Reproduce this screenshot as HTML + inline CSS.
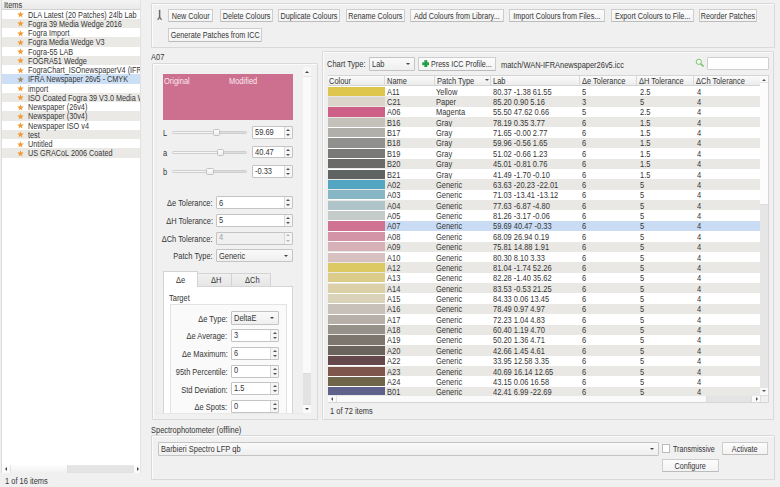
<!DOCTYPE html><html><head><meta charset="utf-8"><style>
*{box-sizing:border-box}
html,body{margin:0;padding:0}
body{width:780px;height:487px;overflow:hidden;background:#f0f0f0;position:relative;font-family:"Liberation Sans",sans-serif;font-size:8.3px;color:#353535}
.a{position:absolute}
.t{position:absolute;white-space:nowrap;line-height:10px;height:10px;transform:scaleX(.9);transform-origin:0 50%}
.t.r{transform-origin:100% 50%}
.gbox{border:1px solid #d9d9d9;border-radius:1px;box-shadow:inset 1px 1px 0 #fbfbfb}
.btn{border:1px solid #cdcdcd;border-bottom-color:#bcbcbc;background:linear-gradient(#fcfcfc,#f3f3f3);border-radius:1px;text-align:center;white-space:nowrap}
.btn span{position:absolute;left:-30px;right:-30px;top:1px;line-height:11px;transform:scaleX(.87)}
.spin{border:1px solid #c4c4c4;background:#fff;border-radius:1px;overflow:hidden}
.spin span{position:absolute;left:2px;top:-0.4px;white-space:nowrap;transform:scaleX(.9);transform-origin:0 50%}
.spin.dis{background:#f0f0f0;color:#a0a0a0}
.sa{position:absolute;right:0;top:0;width:8px;border-left:1px solid #d8d8d8;background:#f5f5f5}
.sa b{position:absolute;left:1.6px;width:0;height:0;border-left:2.3px solid transparent;border-right:2.3px solid transparent}
.sa .up{top:1.8px;border-bottom:2.4px solid #555}
.sa .dn{bottom:1.8px;border-top:2.4px solid #555}
.spin.dis .sa b{opacity:.4}
.combo{border:1px solid #c4c4c4;background:linear-gradient(#fafafa,#efefef);border-radius:1px;overflow:hidden}
.combo span{position:absolute;left:2px;top:0;white-space:nowrap;transform:scaleX(.9);transform-origin:0 50%}
.dd{position:absolute;right:4px;top:50%;margin-top:-1px;width:0;height:0;border-left:2.5px solid transparent;border-right:2.5px solid transparent;border-top:2.5px solid #444}
.row{position:absolute;left:0;right:0;white-space:nowrap}
</style></head><body>
<div class="a" style="left:1px;top:0;width:140px;height:473.4px;background:#fff;border-left:1px solid #dcdcdc;border-right:1px solid #e2e2e2;overflow:hidden">
<div class="a" style="left:0;top:0;width:140px;height:9.5px;background:linear-gradient(#f4f4f4,#e9e9e9);border-bottom:1px solid #d2d2d2"></div>
<div class="t" style="left:2.3px;top:-0.3px">Items</div>
<div class="a" style="left:0;top:9.50px;width:140px;height:9.25px;background:#fff"></div>
<div class="a" style="left:0;top:18.75px;width:140px;height:9.25px;background:#eae9e6"></div>
<div class="a" style="left:0;top:28.00px;width:140px;height:9.25px;background:#fff"></div>
<div class="a" style="left:0;top:37.25px;width:140px;height:9.25px;background:#eae9e6"></div>
<div class="a" style="left:0;top:46.50px;width:140px;height:9.25px;background:#fff"></div>
<div class="a" style="left:0;top:55.75px;width:140px;height:9.25px;background:#eae9e6"></div>
<div class="a" style="left:0;top:65.00px;width:140px;height:9.25px;background:#fff"></div>
<div class="a" style="left:0;top:74.25px;width:140px;height:9.25px;background:#cddff4"></div>
<div class="a" style="left:0;top:83.50px;width:140px;height:9.25px;background:#fff"></div>
<div class="a" style="left:0;top:92.75px;width:140px;height:9.25px;background:#eae9e6"></div>
<div class="a" style="left:0;top:102.00px;width:140px;height:9.25px;background:#fff"></div>
<div class="a" style="left:0;top:111.25px;width:140px;height:9.25px;background:#eae9e6"></div>
<div class="a" style="left:0;top:120.50px;width:140px;height:9.25px;background:#fff"></div>
<div class="a" style="left:0;top:129.75px;width:140px;height:9.25px;background:#eae9e6"></div>
<div class="a" style="left:0;top:139.00px;width:140px;height:9.25px;background:#fff"></div>
<div class="a" style="left:0;top:148.25px;width:140px;height:9.25px;background:#eae9e6"></div>
<div class="a" style="left:0;top:9.50px;width:140px;height:9.25px"><svg width="7" height="7" viewBox="0 0 10 10" style="position:absolute;left:14.9px;top:1.6px"><path d="M5 0.3 L6.2 3.6 L9.7 3.7 L6.9 5.9 L7.9 9.4 L5 7.3 L2.1 9.4 L3.1 5.9 L0.3 3.7 L3.8 3.6Z" fill="#ef9a32"/></svg><div class="t" style="left:26px;top:0px;transform:scaleX(.875)">DLA Latest (20 Patches) 24lb Lab</div></div>
<div class="a" style="left:0;top:18.75px;width:140px;height:9.25px"><svg width="7" height="7" viewBox="0 0 10 10" style="position:absolute;left:14.9px;top:1.6px"><path d="M5 0.3 L6.2 3.6 L9.7 3.7 L6.9 5.9 L7.9 9.4 L5 7.3 L2.1 9.4 L3.1 5.9 L0.3 3.7 L3.8 3.6Z" fill="#ef9a32"/></svg><div class="t" style="left:26px;top:0px;transform:scaleX(.875)">Fogra 39 Media Wedge 2016</div></div>
<div class="a" style="left:0;top:28.00px;width:140px;height:9.25px"><svg width="7" height="7" viewBox="0 0 10 10" style="position:absolute;left:14.9px;top:1.6px"><path d="M5 0.3 L6.2 3.6 L9.7 3.7 L6.9 5.9 L7.9 9.4 L5 7.3 L2.1 9.4 L3.1 5.9 L0.3 3.7 L3.8 3.6Z" fill="#ef9a32"/></svg><div class="t" style="left:26px;top:0px;transform:scaleX(.875)">Fogra Import</div></div>
<div class="a" style="left:0;top:37.25px;width:140px;height:9.25px"><svg width="7" height="7" viewBox="0 0 10 10" style="position:absolute;left:14.9px;top:1.6px"><path d="M5 0.3 L6.2 3.6 L9.7 3.7 L6.9 5.9 L7.9 9.4 L5 7.3 L2.1 9.4 L3.1 5.9 L0.3 3.7 L3.8 3.6Z" fill="#ef9a32"/></svg><div class="t" style="left:26px;top:0px;transform:scaleX(.875)">Fogra Media Wedge V3</div></div>
<div class="a" style="left:0;top:46.50px;width:140px;height:9.25px"><svg width="7" height="7" viewBox="0 0 10 10" style="position:absolute;left:14.9px;top:1.6px"><path d="M5 0.3 L6.2 3.6 L9.7 3.7 L6.9 5.9 L7.9 9.4 L5 7.3 L2.1 9.4 L3.1 5.9 L0.3 3.7 L3.8 3.6Z" fill="#ef9a32"/></svg><div class="t" style="left:26px;top:0px;transform:scaleX(.875)">Fogra-55 LAB</div></div>
<div class="a" style="left:0;top:55.75px;width:140px;height:9.25px"><svg width="7" height="7" viewBox="0 0 10 10" style="position:absolute;left:14.9px;top:1.6px"><path d="M5 0.3 L6.2 3.6 L9.7 3.7 L6.9 5.9 L7.9 9.4 L5 7.3 L2.1 9.4 L3.1 5.9 L0.3 3.7 L3.8 3.6Z" fill="#ef9a32"/></svg><div class="t" style="left:26px;top:0px;transform:scaleX(.875)">FOGRA51 Wedge</div></div>
<div class="a" style="left:0;top:65.00px;width:140px;height:9.25px"><svg width="7" height="7" viewBox="0 0 10 10" style="position:absolute;left:14.9px;top:1.6px"><path d="M5 0.3 L6.2 3.6 L9.7 3.7 L6.9 5.9 L7.9 9.4 L5 7.3 L2.1 9.4 L3.1 5.9 L0.3 3.7 L3.8 3.6Z" fill="#ef9a32"/></svg><div class="t" style="left:26px;top:0px;transform:scaleX(.875)">FograChart_ISOnewspaperV4 (IFRA26)</div></div>
<div class="a" style="left:0;top:74.25px;width:140px;height:9.25px"><svg width="7" height="7" viewBox="0 0 10 10" style="position:absolute;left:14.9px;top:1.6px"><path d="M5 0.3 L6.2 3.6 L9.7 3.7 L6.9 5.9 L7.9 9.4 L5 7.3 L2.1 9.4 L3.1 5.9 L0.3 3.7 L3.8 3.6Z" fill="#a08a6a"/></svg><div class="t" style="left:26px;top:0px;transform:scaleX(.875)">IFRA Newspaper 26v5 - CMYK</div></div>
<div class="a" style="left:0;top:83.50px;width:140px;height:9.25px"><svg width="7" height="7" viewBox="0 0 10 10" style="position:absolute;left:14.9px;top:1.6px"><path d="M5 0.3 L6.2 3.6 L9.7 3.7 L6.9 5.9 L7.9 9.4 L5 7.3 L2.1 9.4 L3.1 5.9 L0.3 3.7 L3.8 3.6Z" fill="#ef9a32"/></svg><div class="t" style="left:26px;top:0px;transform:scaleX(.875)">import</div></div>
<div class="a" style="left:0;top:92.75px;width:140px;height:9.25px"><svg width="7" height="7" viewBox="0 0 10 10" style="position:absolute;left:14.9px;top:1.6px"><path d="M5 0.3 L6.2 3.6 L9.7 3.7 L6.9 5.9 L7.9 9.4 L5 7.3 L2.1 9.4 L3.1 5.9 L0.3 3.7 L3.8 3.6Z" fill="#ef9a32"/></svg><div class="t" style="left:26px;top:0px;transform:scaleX(.875)">ISO Coated Fogra 39 V3.0 Media Wedge</div></div>
<div class="a" style="left:0;top:102.00px;width:140px;height:9.25px"><svg width="7" height="7" viewBox="0 0 10 10" style="position:absolute;left:14.9px;top:1.6px"><path d="M5 0.3 L6.2 3.6 L9.7 3.7 L6.9 5.9 L7.9 9.4 L5 7.3 L2.1 9.4 L3.1 5.9 L0.3 3.7 L3.8 3.6Z" fill="#ef9a32"/></svg><div class="t" style="left:26px;top:0px;transform:scaleX(.875)">Newspaper (26v4)</div></div>
<div class="a" style="left:0;top:111.25px;width:140px;height:9.25px"><svg width="7" height="7" viewBox="0 0 10 10" style="position:absolute;left:14.9px;top:1.6px"><path d="M5 0.3 L6.2 3.6 L9.7 3.7 L6.9 5.9 L7.9 9.4 L5 7.3 L2.1 9.4 L3.1 5.9 L0.3 3.7 L3.8 3.6Z" fill="#ef9a32"/></svg><div class="t" style="left:26px;top:0px;transform:scaleX(.875)">Newspaper (30v4)</div></div>
<div class="a" style="left:0;top:120.50px;width:140px;height:9.25px"><svg width="7" height="7" viewBox="0 0 10 10" style="position:absolute;left:14.9px;top:1.6px"><path d="M5 0.3 L6.2 3.6 L9.7 3.7 L6.9 5.9 L7.9 9.4 L5 7.3 L2.1 9.4 L3.1 5.9 L0.3 3.7 L3.8 3.6Z" fill="#ef9a32"/></svg><div class="t" style="left:26px;top:0px;transform:scaleX(.875)">Newspaper ISO v4</div></div>
<div class="a" style="left:0;top:129.75px;width:140px;height:9.25px"><svg width="7" height="7" viewBox="0 0 10 10" style="position:absolute;left:14.9px;top:1.6px"><path d="M5 0.3 L6.2 3.6 L9.7 3.7 L6.9 5.9 L7.9 9.4 L5 7.3 L2.1 9.4 L3.1 5.9 L0.3 3.7 L3.8 3.6Z" fill="#ef9a32"/></svg><div class="t" style="left:26px;top:0px;transform:scaleX(.875)">test</div></div>
<div class="a" style="left:0;top:139.00px;width:140px;height:9.25px"><svg width="7" height="7" viewBox="0 0 10 10" style="position:absolute;left:14.9px;top:1.6px"><path d="M5 0.3 L6.2 3.6 L9.7 3.7 L6.9 5.9 L7.9 9.4 L5 7.3 L2.1 9.4 L3.1 5.9 L0.3 3.7 L3.8 3.6Z" fill="#ef9a32"/></svg><div class="t" style="left:26px;top:0px;transform:scaleX(.875)">Untitled</div></div>
<div class="a" style="left:0;top:148.25px;width:140px;height:9.25px"><svg width="7" height="7" viewBox="0 0 10 10" style="position:absolute;left:14.9px;top:1.6px"><path d="M5 0.3 L6.2 3.6 L9.7 3.7 L6.9 5.9 L7.9 9.4 L5 7.3 L2.1 9.4 L3.1 5.9 L0.3 3.7 L3.8 3.6Z" fill="#ef9a32"/></svg><div class="t" style="left:26px;top:0px;transform:scaleX(.875)">US GRACoL 2006 Coated</div></div>
<div class="a" style="left:0;top:464.6px;width:140px;height:8.8px;background:#e4e4e4;border-top:1px solid #e8e8e8;border-bottom:1px solid #e2e2e2"></div>
<div class="a" style="left:0;top:465.4px;width:8.2px;height:7.8px;background:#fbfbfb"></div>
<div class="a" style="left:3px;top:467.3px;width:0;height:0;border-top:2.2px solid transparent;border-bottom:2.2px solid transparent;border-right:2.2px solid #444"></div>
<div class="a" style="left:8.2px;top:465.2px;width:58.2px;height:8px;background:linear-gradient(#fdfdfd,#f1f1f1);border-left:1px solid #e3e3e3;border-right:1px solid #dedede"></div>
<div class="a" style="left:131.5px;top:465.4px;width:8.5px;height:7.8px;background:#fbfbfb"></div>
<div class="a" style="left:134.6px;top:467.3px;width:0;height:0;border-top:2.2px solid transparent;border-bottom:2.2px solid transparent;border-left:2.2px solid #444"></div>
</div>
<div class="t" style="left:4.5px;top:475.6px;">1 of 16 items</div>
<div class="a gbox" style="left:151px;top:2.5px;width:624.2px;height:45.5px;"></div>
<svg class="a" style="left:155px;top:9px" width="10" height="12" viewBox="0 0 10 12"><path d="M4.6 0.8 V8" stroke="#6a6a6a" stroke-width="1.5" fill="none"/><path d="M4.6 7.5 Q4.6 9 2.6 10.8 M4.6 7.5 Q4.6 9 6.6 10.8" stroke="#6a6a6a" stroke-width="1.3" fill="none"/></svg>
<div class="a btn" style="left:168.1px;top:8.9px;width:45.4px;height:13.2px;"><span>New Colour</span></div>
<div class="a btn" style="left:219.6px;top:8.9px;width:53.2px;height:13.2px;"><span>Delete Colours</span></div>
<div class="a btn" style="left:278.4px;top:8.9px;width:62.0px;height:13.2px;"><span>Duplicate Colours</span></div>
<div class="a btn" style="left:346.1px;top:8.9px;width:58.7px;height:13.2px;"><span>Rename Colours</span></div>
<div class="a btn" style="left:410.4px;top:8.9px;width:93.6px;height:13.2px;"><span>Add Colours from Library...</span></div>
<div class="a btn" style="left:509.3px;top:8.9px;width:95.5px;height:13.2px;"><span>Import Colours from Files...</span></div>
<div class="a btn" style="left:610.7px;top:8.9px;width:83.3px;height:13.2px;"><span>Export Colours to File...</span></div>
<div class="a btn" style="left:698.9px;top:8.9px;width:57.9px;height:13.2px;"><span>Reorder Patches</span></div>
<div class="a btn" style="left:168.1px;top:28.3px;width:94.4px;height:13.5px;"><span>Generate Patches from ICC</span></div>
<div class="t" style="left:150.5px;top:51.7px;">A07</div>
<div class="a gbox" style="left:151.5px;top:63px;width:166.3px;height:356.9px;"></div>
<div class="a" style="left:155.5px;top:67px;width:157px;height:347px;border-left:1px solid #ebebeb;"></div>
<div class="a" style="left:0;top:0;width:780px;height:487px;clip-path:inset(67px 476.5px 74px 155.5px)">
<div class="a" style="left:162.6px;top:74.2px;width:130.6px;height:45.8px;background:#cd6f8e"></div>
<div class="t" style="left:163.5px;top:75.5px;color:#fbe9ee">Original</div>
<div class="t" style="left:229.1px;top:75.5px;color:#fbe9ee">Modified</div>
<div class="t" style="left:162.6px;top:128.3px;">L</div>
<div class="a" style="left:171.8px;top:131.0px;width:75.6px;height:3.0px;background:#dcdcdc;border:0.5px solid #cfcfcf;border-radius:1.5px"></div>
<div class="a" style="left:171.8px;top:131.0px;width:42.9px;height:3.0px;background:#f5f5f5;border:0.5px solid #cfcfcf;border-radius:1.5px"></div>
<div class="a" style="left:212.7px;top:128.7px;width:7.2px;height:7.6px;background:linear-gradient(#fdfdfd,#eeeeee);border:1px solid #c2c2c2;border-radius:1.5px"></div>
<div class="a spin" style="left:251.8px;top:126.1px;width:41.1px;height:12.6px;"><span style="line-height:11.6px">59.69</span><i class="sa" style="height:10.6px"><b class="up"></b><b class="dn"></b></i></div>
<div class="t" style="left:162.6px;top:148.1px;">a</div>
<div class="a" style="left:171.8px;top:150.8px;width:75.6px;height:3.0px;background:#dcdcdc;border:0.5px solid #cfcfcf;border-radius:1.5px"></div>
<div class="a" style="left:171.8px;top:150.8px;width:46.9px;height:3.0px;background:#f5f5f5;border:0.5px solid #cfcfcf;border-radius:1.5px"></div>
<div class="a" style="left:216.7px;top:148.5px;width:7.2px;height:7.6px;background:linear-gradient(#fdfdfd,#eeeeee);border:1px solid #c2c2c2;border-radius:1.5px"></div>
<div class="a spin" style="left:251.8px;top:145.9px;width:41.1px;height:12.6px;"><span style="line-height:11.6px">40.47</span><i class="sa" style="height:10.6px"><b class="up"></b><b class="dn"></b></i></div>
<div class="t" style="left:162.6px;top:167.4px;">b</div>
<div class="a" style="left:171.8px;top:170.1px;width:75.6px;height:3.0px;background:#dcdcdc;border:0.5px solid #cfcfcf;border-radius:1.5px"></div>
<div class="a" style="left:171.8px;top:170.1px;width:36.6px;height:3.0px;background:#f5f5f5;border:0.5px solid #cfcfcf;border-radius:1.5px"></div>
<div class="a" style="left:206.4px;top:167.79999999999998px;width:7.2px;height:7.6px;background:linear-gradient(#fdfdfd,#eeeeee);border:1px solid #c2c2c2;border-radius:1.5px"></div>
<div class="a spin" style="left:251.8px;top:165.2px;width:41.1px;height:12.6px;"><span style="line-height:11.6px">-0.33</span><i class="sa" style="height:10.6px"><b class="up"></b><b class="dn"></b></i></div>
<div class="t r" style="right:567.1px;top:198.35px;">Δe Tolerance:</div>
<div class="a spin" style="left:216.4px;top:196px;width:76.4px;height:13.1px;"><span style="line-height:12.1px">6</span><i class="sa" style="height:11.1px"><b class="up"></b><b class="dn"></b></i></div>
<div class="t r" style="right:567.1px;top:216.2px;">ΔH Tolerance:</div>
<div class="a spin" style="left:216.4px;top:214px;width:76.4px;height:12.8px;"><span style="line-height:11.8px">5</span><i class="sa" style="height:10.8px"><b class="up"></b><b class="dn"></b></i></div>
<div class="t r" style="right:567.1px;top:233.95px;">ΔCh Tolerance:</div>
<div class="a spin dis" style="left:216.4px;top:231.7px;width:76.4px;height:12.9px;"><span style="line-height:11.9px">4</span><i class="sa" style="height:10.9px"><b class="up"></b><b class="dn"></b></i></div>
<div class="t r" style="right:567.1px;top:251.3px;">Patch Type:</div>
<div class="a combo" style="left:216.4px;top:249px;width:76.4px;height:13px;"><span style="line-height:12px">Generic</span><b class="dd"></b></div>
<div class="a" style="left:163.4px;top:286px;width:129.4px;height:134px;background:#fff;border:1px solid #d6d6d6"></div>
<div class="a" style="left:197.2px;top:272.9px;width:34.7px;height:13.6px;background:linear-gradient(#f1f1f1,#e6e6e6);border:1px solid #d3d3d3;border-bottom:none"></div>
<div class="a" style="left:231.2px;top:272.9px;width:39.4px;height:13.6px;background:linear-gradient(#f1f1f1,#e6e6e6);border:1px solid #d3d3d3;border-bottom:none"></div>
<div class="a" style="left:163.4px;top:271.2px;width:34.4px;height:15.8px;background:#fff;border:1px solid #d3d3d3;border-bottom:none"></div>
<div class="t" style="left:176px;top:274.8px;">Δe</div>
<div class="t" style="left:210.7px;top:275.3px;">ΔH</div>
<div class="t" style="left:245px;top:275.3px;">ΔCh</div>
<div class="t" style="left:169.3px;top:293.4px;">Target</div>
<div class="a" style="left:170.2px;top:304.4px;width:116.4px;height:125.6px;border:1px solid #e3e3e3;background:#fafafa"></div>
<div class="t r" style="right:552.7px;top:313.8px;">Δe Type:</div>
<div class="a combo" style="left:231.4px;top:311.2px;width:48.0px;height:13.4px;"><span style="line-height:12.4px">DeltaE</span><b class="dd"></b></div>
<div class="t r" style="right:552.7px;top:331.1px;">Δe Average:</div>
<div class="a spin" style="left:231.4px;top:328.90000000000003px;width:48.0px;height:12.8px;"><span style="line-height:11.8px">3</span><i class="sa" style="height:10.8px"><b class="up"></b><b class="dn"></b></i></div>
<div class="t r" style="right:552.7px;top:349.1px;">Δe Maximum:</div>
<div class="a spin" style="left:231.4px;top:346.90000000000003px;width:48.0px;height:12.8px;"><span style="line-height:11.8px">6</span><i class="sa" style="height:10.8px"><b class="up"></b><b class="dn"></b></i></div>
<div class="t r" style="right:552.7px;top:367.0px;">95th Percentile:</div>
<div class="a spin" style="left:231.4px;top:364.8px;width:48.0px;height:12.8px;"><span style="line-height:11.8px">0</span><i class="sa" style="height:10.8px"><b class="up"></b><b class="dn"></b></i></div>
<div class="t r" style="right:552.7px;top:384.6px;">Std Deviation:</div>
<div class="a spin" style="left:231.4px;top:382.40000000000003px;width:48.0px;height:12.8px;"><span style="line-height:11.8px">1.5</span><i class="sa" style="height:10.8px"><b class="up"></b><b class="dn"></b></i></div>
<div class="t r" style="right:552.7px;top:402.4px;">Δe Spots:</div>
<div class="a spin" style="left:231.4px;top:400.20000000000005px;width:48.0px;height:12.8px;"><span style="line-height:11.8px">0</span><i class="sa" style="height:10.8px"><b class="up"></b><b class="dn"></b></i></div>
</div>
<div class="a" style="left:303.4px;top:67px;width:7.9px;height:346.2px;background:#fafafa"></div>
<div class="a" style="left:303.4px;top:67px;width:7.9px;height:9.8px;background:#f7f7f7;border-bottom:1px solid #e4e4e4"></div>
<div class="a" style="left:303.4px;top:372.9px;width:7.9px;height:32.0px;background:#e3e3e3;border-top:1px solid #dcdcdc;border-bottom:1px solid #dcdcdc"></div>
<div class="a" style="left:304.7px;top:71.4px;width:0;height:0;border-left:2.7px solid transparent;border-right:2.7px solid transparent;border-bottom:2.8px solid #444"></div>
<div class="a" style="left:304.9px;top:407.8px;width:0;height:0;border-left:2.5px solid transparent;border-right:2.5px solid transparent;border-top:2.6px solid #444"></div>
<div class="a" style="left:155.5px;top:413px;width:147.9px;height:1px;background:#e8e8e8"></div>
<div class="a gbox" style="left:322.2px;top:51.2px;width:452.2px;height:368.7px;"></div>
<div class="t" style="left:326.9px;top:59.2px;">Chart Type:</div>
<div class="a combo" style="left:369.4px;top:56.7px;width:45.6px;height:13.9px;"><span style="line-height:12.9px">Lab</span><b class="dd"></b></div>
<div class="a btn" style="left:418.2px;top:57.3px;width:77.8px;height:13.3px;"><span></span></div>
<svg class="a" style="left:421.8px;top:59.9px" width="7.6" height="7.6" viewBox="0 0 7 7"><path d="M2.3 0.3H4.7V2.3H6.7V4.7H4.7V6.7H2.3V4.7H0.3V2.3H2.3Z" fill="#23a047" stroke="#23a047" stroke-width="0.3" stroke-linejoin="round"/></svg>
<div class="t" style="left:431.4px;top:59.3px;transform:scaleX(.86)">Press ICC Profile...</div>
<div class="t" style="left:501.3px;top:59.8px;">match/WAN-IFRAnewspaper26v5.icc</div>
<svg class="a" style="left:694.5px;top:58.3px" width="10" height="10" viewBox="0 0 10 10"><circle cx="3.8" cy="3.8" r="2.6" stroke="#7cc66a" stroke-width="1" fill="#f4fbf2"/><path d="M5.7 5.7 L8.6 8.6" stroke="#6dbb5a" stroke-width="1.4"/></svg>
<div class="a" style="left:707px;top:57.3px;width:61.6px;height:13.1px;background:#fff;border:1px solid #cfcfcf;border-radius:1px"></div>
<div class="a" style="left:327.9px;top:74.6px;width:440.9px;height:328.6px;background:#fff;border:1px solid #d5d5d5"></div>
<div class="a" style="left:328.2px;top:75.6px;width:432.2px;height:10.2px;background:linear-gradient(#fbfbfb,#ececec);border-bottom:1px solid #d4d4d4"></div>
<div class="t" style="left:329.4px;top:76.0px;">Colour</div>
<div class="a" style="left:384.1px;top:75.6px;width:1.0px;height:9.9px;background:#d9d9d9"></div>
<div class="t" style="left:386.8px;top:76.0px;">Name</div>
<div class="a" style="left:434.0px;top:75.6px;width:1.0px;height:9.9px;background:#d9d9d9"></div>
<div class="t" style="left:436.7px;top:76.0px;">Patch Type</div>
<div class="a" style="left:490.3px;top:75.6px;width:1.0px;height:9.9px;background:#d9d9d9"></div>
<div class="t" style="left:493.0px;top:76.0px;">Lab</div>
<div class="a" style="left:578.9px;top:75.6px;width:1.0px;height:9.9px;background:#d9d9d9"></div>
<div class="t" style="left:581.6px;top:76.0px;">Δe Tolerance</div>
<div class="a" style="left:636.4px;top:75.6px;width:1.0px;height:9.9px;background:#d9d9d9"></div>
<div class="t" style="left:639.1px;top:76.0px;">ΔH Tolerance</div>
<div class="a" style="left:693.3px;top:75.6px;width:1.0px;height:9.9px;background:#d9d9d9"></div>
<div class="t" style="left:696.0px;top:76.0px;">ΔCh Tolerance</div>
<div class="a" style="left:484.5px;top:79.4px;width:0;height:0;border-left:2.3px solid transparent;border-right:2.3px solid transparent;border-top:2.3px solid #555"></div>
<div class="a" style="left:328.2px;top:86px;width:432.7px;height:309.2px;overflow:hidden">
<div class="row" style="top:0.00px;height:10.37px;background:#fff"><div class="a" style="left:0px;top:0.6px;width:57px;height:9.2px;background:#dec64d"></div><div class="t" style="left:58.8px;top:0.6px">A11</div><div class="t" style="left:108.2px;top:0.6px">Yellow</div><div class="t" style="left:164.8px;top:0.6px">80.37 -1.38 61.55</div><div class="t" style="left:253.8px;top:0.6px">5</div><div class="t" style="left:311.6px;top:0.6px">2.5</div><div class="t" style="left:369px;top:0.6px">4</div></div>
<div class="row" style="top:10.37px;height:10.37px;background:#e9e8e4"><div class="a" style="left:0px;top:0.6px;width:57px;height:9.2px;background:#dad4cb"></div><div class="t" style="left:58.8px;top:0.6px">C21</div><div class="t" style="left:108.2px;top:0.6px">Paper</div><div class="t" style="left:164.8px;top:0.6px">85.20 0.90 5.16</div><div class="t" style="left:253.8px;top:0.6px">3</div><div class="t" style="left:311.6px;top:0.6px">5</div><div class="t" style="left:369px;top:0.6px">4</div></div>
<div class="row" style="top:20.74px;height:10.37px;background:#fff"><div class="a" style="left:0px;top:0.6px;width:57px;height:9.2px;background:#ce5f86"></div><div class="t" style="left:58.8px;top:0.6px">A06</div><div class="t" style="left:108.2px;top:0.6px">Magenta</div><div class="t" style="left:164.8px;top:0.6px">55.50 47.62 0.66</div><div class="t" style="left:253.8px;top:0.6px">5</div><div class="t" style="left:311.6px;top:0.6px">2.5</div><div class="t" style="left:369px;top:0.6px">4</div></div>
<div class="row" style="top:31.11px;height:10.37px;background:#e9e8e4"><div class="a" style="left:0px;top:0.6px;width:57px;height:9.2px;background:#c4c1ba"></div><div class="t" style="left:58.8px;top:0.6px">B16</div><div class="t" style="left:108.2px;top:0.6px">Gray</div><div class="t" style="left:164.8px;top:0.6px">78.19 0.35 3.77</div><div class="t" style="left:253.8px;top:0.6px">6</div><div class="t" style="left:311.6px;top:0.6px">1.5</div><div class="t" style="left:369px;top:0.6px">4</div></div>
<div class="row" style="top:41.48px;height:10.37px;background:#fff"><div class="a" style="left:0px;top:0.6px;width:57px;height:9.2px;background:#b1afaa"></div><div class="t" style="left:58.8px;top:0.6px">B17</div><div class="t" style="left:108.2px;top:0.6px">Gray</div><div class="t" style="left:164.8px;top:0.6px">71.65 -0.00 2.77</div><div class="t" style="left:253.8px;top:0.6px">6</div><div class="t" style="left:311.6px;top:0.6px">1.5</div><div class="t" style="left:369px;top:0.6px">4</div></div>
<div class="row" style="top:51.85px;height:10.37px;background:#e9e8e4"><div class="a" style="left:0px;top:0.6px;width:57px;height:9.2px;background:#90918e"></div><div class="t" style="left:58.8px;top:0.6px">B18</div><div class="t" style="left:108.2px;top:0.6px">Gray</div><div class="t" style="left:164.8px;top:0.6px">59.96 -0.56 1.65</div><div class="t" style="left:253.8px;top:0.6px">6</div><div class="t" style="left:311.6px;top:0.6px">1.5</div><div class="t" style="left:369px;top:0.6px">4</div></div>
<div class="row" style="top:62.22px;height:10.37px;background:#fff"><div class="a" style="left:0px;top:0.6px;width:57px;height:9.2px;background:#797a77"></div><div class="t" style="left:58.8px;top:0.6px">B19</div><div class="t" style="left:108.2px;top:0.6px">Gray</div><div class="t" style="left:164.8px;top:0.6px">51.02 -0.66 1.23</div><div class="t" style="left:253.8px;top:0.6px">6</div><div class="t" style="left:311.6px;top:0.6px">1.5</div><div class="t" style="left:369px;top:0.6px">4</div></div>
<div class="row" style="top:72.59px;height:10.37px;background:#e9e8e4"><div class="a" style="left:0px;top:0.6px;width:57px;height:9.2px;background:#6a6b69"></div><div class="t" style="left:58.8px;top:0.6px">B20</div><div class="t" style="left:108.2px;top:0.6px">Gray</div><div class="t" style="left:164.8px;top:0.6px">45.01 -0.81 0.76</div><div class="t" style="left:253.8px;top:0.6px">6</div><div class="t" style="left:311.6px;top:0.6px">1.5</div><div class="t" style="left:369px;top:0.6px">4</div></div>
<div class="row" style="top:82.96px;height:10.37px;background:#fff"><div class="a" style="left:0px;top:0.6px;width:57px;height:9.2px;background:#5f6362"></div><div class="t" style="left:58.8px;top:0.6px">B21</div><div class="t" style="left:108.2px;top:0.6px">Gray</div><div class="t" style="left:164.8px;top:0.6px">41.49 -1.70 -0.10</div><div class="t" style="left:253.8px;top:0.6px">6</div><div class="t" style="left:311.6px;top:0.6px">1.5</div><div class="t" style="left:369px;top:0.6px">4</div></div>
<div class="row" style="top:93.33px;height:10.37px;background:#e9e8e4"><div class="a" style="left:0px;top:0.6px;width:57px;height:9.2px;background:#53a6c1"></div><div class="t" style="left:58.8px;top:0.6px">A02</div><div class="t" style="left:108.2px;top:0.6px">Generic</div><div class="t" style="left:164.8px;top:0.6px">63.63 -20.23 -22.01</div><div class="t" style="left:253.8px;top:0.6px">6</div><div class="t" style="left:311.6px;top:0.6px">5</div><div class="t" style="left:369px;top:0.6px">4</div></div>
<div class="row" style="top:103.70px;height:10.37px;background:#fff"><div class="a" style="left:0px;top:0.6px;width:57px;height:9.2px;background:#87b6c5"></div><div class="t" style="left:58.8px;top:0.6px">A03</div><div class="t" style="left:108.2px;top:0.6px">Generic</div><div class="t" style="left:164.8px;top:0.6px">71.03 -13.41 -13.12</div><div class="t" style="left:253.8px;top:0.6px">6</div><div class="t" style="left:311.6px;top:0.6px">5</div><div class="t" style="left:369px;top:0.6px">4</div></div>
<div class="row" style="top:114.07px;height:10.37px;background:#e9e8e4"><div class="a" style="left:0px;top:0.6px;width:57px;height:9.2px;background:#afc4c8"></div><div class="t" style="left:58.8px;top:0.6px">A04</div><div class="t" style="left:108.2px;top:0.6px">Generic</div><div class="t" style="left:164.8px;top:0.6px">77.63 -6.87 -4.80</div><div class="t" style="left:253.8px;top:0.6px">6</div><div class="t" style="left:311.6px;top:0.6px">5</div><div class="t" style="left:369px;top:0.6px">4</div></div>
<div class="row" style="top:124.44px;height:10.37px;background:#fff"><div class="a" style="left:0px;top:0.6px;width:57px;height:9.2px;background:#c4ccca"></div><div class="t" style="left:58.8px;top:0.6px">A05</div><div class="t" style="left:108.2px;top:0.6px">Generic</div><div class="t" style="left:164.8px;top:0.6px">81.26 -3.17 -0.06</div><div class="t" style="left:253.8px;top:0.6px">6</div><div class="t" style="left:311.6px;top:0.6px">5</div><div class="t" style="left:369px;top:0.6px">4</div></div>
<div class="row" style="top:134.81px;height:10.37px;background:#c9dcf3"><div class="a" style="left:0px;top:0.6px;width:57px;height:9.2px;background:#d07292"></div><div class="t" style="left:58.8px;top:0.6px">A07</div><div class="t" style="left:108.2px;top:0.6px">Generic</div><div class="t" style="left:164.8px;top:0.6px">59.69 40.47 -0.33</div><div class="t" style="left:253.8px;top:0.6px">6</div><div class="t" style="left:311.6px;top:0.6px">5</div><div class="t" style="left:369px;top:0.6px">4</div></div>
<div class="row" style="top:145.18px;height:10.37px;background:#fff"><div class="a" style="left:0px;top:0.6px;width:57px;height:9.2px;background:#d494a7"></div><div class="t" style="left:58.8px;top:0.6px">A08</div><div class="t" style="left:108.2px;top:0.6px">Generic</div><div class="t" style="left:164.8px;top:0.6px">68.09 26.94 0.19</div><div class="t" style="left:253.8px;top:0.6px">6</div><div class="t" style="left:311.6px;top:0.6px">5</div><div class="t" style="left:369px;top:0.6px">4</div></div>
<div class="row" style="top:155.55px;height:10.37px;background:#e9e8e4"><div class="a" style="left:0px;top:0.6px;width:57px;height:9.2px;background:#d7b1b8"></div><div class="t" style="left:58.8px;top:0.6px">A09</div><div class="t" style="left:108.2px;top:0.6px">Generic</div><div class="t" style="left:164.8px;top:0.6px">75.81 14.88 1.91</div><div class="t" style="left:253.8px;top:0.6px">6</div><div class="t" style="left:311.6px;top:0.6px">5</div><div class="t" style="left:369px;top:0.6px">4</div></div>
<div class="row" style="top:165.92px;height:10.37px;background:#fff"><div class="a" style="left:0px;top:0.6px;width:57px;height:9.2px;background:#d8c2c1"></div><div class="t" style="left:58.8px;top:0.6px">A10</div><div class="t" style="left:108.2px;top:0.6px">Generic</div><div class="t" style="left:164.8px;top:0.6px">80.30 8.10 3.33</div><div class="t" style="left:253.8px;top:0.6px">6</div><div class="t" style="left:311.6px;top:0.6px">5</div><div class="t" style="left:369px;top:0.6px">4</div></div>
<div class="row" style="top:176.29px;height:10.37px;background:#e9e8e4"><div class="a" style="left:0px;top:0.6px;width:57px;height:9.2px;background:#ddc964"></div><div class="t" style="left:58.8px;top:0.6px">A12</div><div class="t" style="left:108.2px;top:0.6px">Generic</div><div class="t" style="left:164.8px;top:0.6px">81.04 -1.74 52.26</div><div class="t" style="left:253.8px;top:0.6px">6</div><div class="t" style="left:311.6px;top:0.6px">5</div><div class="t" style="left:369px;top:0.6px">4</div></div>
<div class="row" style="top:186.66px;height:10.37px;background:#fff"><div class="a" style="left:0px;top:0.6px;width:57px;height:9.2px;background:#dccc89"></div><div class="t" style="left:58.8px;top:0.6px">A13</div><div class="t" style="left:108.2px;top:0.6px">Generic</div><div class="t" style="left:164.8px;top:0.6px">82.28 -1.40 35.62</div><div class="t" style="left:253.8px;top:0.6px">6</div><div class="t" style="left:311.6px;top:0.6px">5</div><div class="t" style="left:369px;top:0.6px">4</div></div>
<div class="row" style="top:197.03px;height:10.37px;background:#e9e8e4"><div class="a" style="left:0px;top:0.6px;width:57px;height:9.2px;background:#dbd0a8"></div><div class="t" style="left:58.8px;top:0.6px">A14</div><div class="t" style="left:108.2px;top:0.6px">Generic</div><div class="t" style="left:164.8px;top:0.6px">83.53 -0.53 21.25</div><div class="t" style="left:253.8px;top:0.6px">6</div><div class="t" style="left:311.6px;top:0.6px">5</div><div class="t" style="left:369px;top:0.6px">4</div></div>
<div class="row" style="top:207.40px;height:10.37px;background:#fff"><div class="a" style="left:0px;top:0.6px;width:57px;height:9.2px;background:#dad2b9"></div><div class="t" style="left:58.8px;top:0.6px">A15</div><div class="t" style="left:108.2px;top:0.6px">Generic</div><div class="t" style="left:164.8px;top:0.6px">84.33 0.06 13.45</div><div class="t" style="left:253.8px;top:0.6px">6</div><div class="t" style="left:311.6px;top:0.6px">5</div><div class="t" style="left:369px;top:0.6px">4</div></div>
<div class="row" style="top:217.77px;height:10.37px;background:#e9e8e4"><div class="a" style="left:0px;top:0.6px;width:57px;height:9.2px;background:#c7c1b9"></div><div class="t" style="left:58.8px;top:0.6px">A16</div><div class="t" style="left:108.2px;top:0.6px">Generic</div><div class="t" style="left:164.8px;top:0.6px">78.49 0.97 4.97</div><div class="t" style="left:253.8px;top:0.6px">6</div><div class="t" style="left:311.6px;top:0.6px">5</div><div class="t" style="left:369px;top:0.6px">4</div></div>
<div class="row" style="top:228.14px;height:10.37px;background:#fff"><div class="a" style="left:0px;top:0.6px;width:57px;height:9.2px;background:#b6b0a8"></div><div class="t" style="left:58.8px;top:0.6px">A17</div><div class="t" style="left:108.2px;top:0.6px">Generic</div><div class="t" style="left:164.8px;top:0.6px">72.23 1.04 4.83</div><div class="t" style="left:253.8px;top:0.6px">6</div><div class="t" style="left:311.6px;top:0.6px">5</div><div class="t" style="left:369px;top:0.6px">4</div></div>
<div class="row" style="top:238.51px;height:10.37px;background:#e9e8e4"><div class="a" style="left:0px;top:0.6px;width:57px;height:9.2px;background:#969189"></div><div class="t" style="left:58.8px;top:0.6px">A18</div><div class="t" style="left:108.2px;top:0.6px">Generic</div><div class="t" style="left:164.8px;top:0.6px">60.40 1.19 4.70</div><div class="t" style="left:253.8px;top:0.6px">6</div><div class="t" style="left:311.6px;top:0.6px">5</div><div class="t" style="left:369px;top:0.6px">4</div></div>
<div class="row" style="top:248.88px;height:10.37px;background:#fff"><div class="a" style="left:0px;top:0.6px;width:57px;height:9.2px;background:#7c766f"></div><div class="t" style="left:58.8px;top:0.6px">A19</div><div class="t" style="left:108.2px;top:0.6px">Generic</div><div class="t" style="left:164.8px;top:0.6px">50.20 1.36 4.71</div><div class="t" style="left:253.8px;top:0.6px">6</div><div class="t" style="left:311.6px;top:0.6px">5</div><div class="t" style="left:369px;top:0.6px">4</div></div>
<div class="row" style="top:259.25px;height:10.37px;background:#e9e8e4"><div class="a" style="left:0px;top:0.6px;width:57px;height:9.2px;background:#6a645d"></div><div class="t" style="left:58.8px;top:0.6px">A20</div><div class="t" style="left:108.2px;top:0.6px">Generic</div><div class="t" style="left:164.8px;top:0.6px">42.66 1.45 4.61</div><div class="t" style="left:253.8px;top:0.6px">6</div><div class="t" style="left:311.6px;top:0.6px">5</div><div class="t" style="left:369px;top:0.6px">4</div></div>
<div class="row" style="top:269.62px;height:10.37px;background:#fff"><div class="a" style="left:0px;top:0.6px;width:57px;height:9.2px;background:#64484b"></div><div class="t" style="left:58.8px;top:0.6px">A22</div><div class="t" style="left:108.2px;top:0.6px">Generic</div><div class="t" style="left:164.8px;top:0.6px">33.95 12.58 3.35</div><div class="t" style="left:253.8px;top:0.6px">6</div><div class="t" style="left:311.6px;top:0.6px">5</div><div class="t" style="left:369px;top:0.6px">4</div></div>
<div class="row" style="top:279.99px;height:10.37px;background:#e9e8e4"><div class="a" style="left:0px;top:0.6px;width:57px;height:9.2px;background:#7e564c"></div><div class="t" style="left:58.8px;top:0.6px">A23</div><div class="t" style="left:108.2px;top:0.6px">Generic</div><div class="t" style="left:164.8px;top:0.6px">40.69 16.14 12.65</div><div class="t" style="left:253.8px;top:0.6px">6</div><div class="t" style="left:311.6px;top:0.6px">5</div><div class="t" style="left:369px;top:0.6px">4</div></div>
<div class="row" style="top:290.36px;height:10.37px;background:#fff"><div class="a" style="left:0px;top:0.6px;width:57px;height:9.2px;background:#6e654a"></div><div class="t" style="left:58.8px;top:0.6px">A24</div><div class="t" style="left:108.2px;top:0.6px">Generic</div><div class="t" style="left:164.8px;top:0.6px">43.15 0.06 16.58</div><div class="t" style="left:253.8px;top:0.6px">6</div><div class="t" style="left:311.6px;top:0.6px">5</div><div class="t" style="left:369px;top:0.6px">4</div></div>
<div class="row" style="top:300.73px;height:10.37px;background:#e9e8e4"><div class="a" style="left:0px;top:0.6px;width:57px;height:9.2px;background:#60618a"></div><div class="t" style="left:58.8px;top:0.6px">B01</div><div class="t" style="left:108.2px;top:0.6px">Generic</div><div class="t" style="left:164.8px;top:0.6px">42.41 6.99 -22.69</div><div class="t" style="left:253.8px;top:0.6px">6</div><div class="t" style="left:311.6px;top:0.6px">5</div><div class="t" style="left:369px;top:0.6px">4</div></div>
</div>
<div class="a" style="left:760.4px;top:75.6px;width:7.9px;height:319.7px;background:#e6e6e6"></div>
<div class="a" style="left:760.4px;top:75.6px;width:7.9px;height:7.0px;background:#fafafa;border-bottom:1px solid #e2e2e2"></div>
<div class="a" style="left:762.2px;top:78.6px;width:0;height:0;border-left:2.3px solid transparent;border-right:2.3px solid transparent;border-bottom:2.3px solid #555"></div>
<div class="a" style="left:760.4px;top:82.6px;width:7.9px;height:122.6px;background:#fcfcfc;border-bottom:1px solid #dedede"></div>
<div class="a" style="left:760.4px;top:387.7px;width:7.9px;height:7.6px;background:#fafafa"></div>
<div class="a" style="left:762.2px;top:390px;width:0;height:0;border-left:2.3px solid transparent;border-right:2.3px solid transparent;border-top:2.3px solid #555"></div>
<div class="a" style="left:328.2px;top:395.3px;width:432.2px;height:7.0px;background:#fafafa;border-top:1px solid #e8e8e8"></div>
<div class="a" style="left:330.5px;top:397.1px;width:0;height:0;border-top:2.1px solid transparent;border-bottom:2.1px solid transparent;border-right:2.1px solid #555"></div>
<div class="a" style="left:335.5px;top:395.3px;width:0.8px;height:7.0px;background:#e4e4e4"></div>
<div class="a" style="left:706px;top:395.5px;width:46px;height:6.8px;background:#e4e4e4;border-left:1px solid #dcdcdc;border-right:1px solid #dcdcdc"></div>
<div class="a" style="left:755.6px;top:397.1px;width:0;height:0;border-top:2.1px solid transparent;border-bottom:2.1px solid transparent;border-left:2.1px solid #555"></div>
<div class="a" style="left:760.4px;top:395.3px;width:7.9px;height:7.0px;background:#f0f0f0;border-left:1px solid #dedede;border-top:1px solid #dedede"></div>
<div class="t" style="left:330.4px;top:406.0px;">1 of 72 items</div>
<div class="t" style="left:150.8px;top:425.3px;">Spectrophotometer (offline)</div>
<div class="a gbox" style="left:151.3px;top:435.4px;width:623.3px;height:44.2px;"></div>
<div class="a combo" style="left:158px;top:442px;width:500.8px;height:13.7px;"><span style="line-height:12.7px">Barbieri Spectro LFP qb</span><b class="dd"></b></div>
<div class="a" style="left:662.3px;top:444.3px;width:8.2px;height:9.0px;background:#fff;border:1px solid #bcbcbc"></div>
<div class="t" style="left:673.3px;top:444.2px;transform:scaleX(.86)">Transmissive</div>
<div class="a btn" style="left:722.3px;top:442.2px;width:45.4px;height:13.2px;"><span>Activate</span></div>
<div class="a btn" style="left:662.3px;top:459.1px;width:56.3px;height:13.3px;"><span>Configure</span></div>
</body></html>
